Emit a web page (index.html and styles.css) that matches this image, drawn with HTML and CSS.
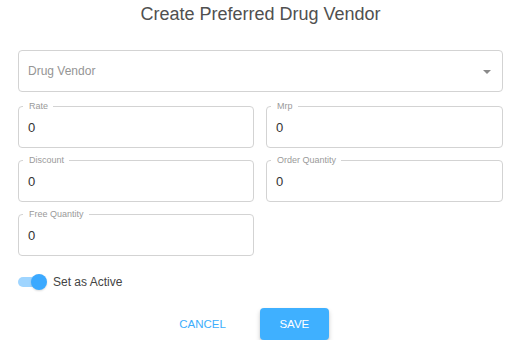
FILE: index.html
```html
<!DOCTYPE html>
<html>
<head>
<meta charset="utf-8">
<link rel="stylesheet" href="styles.css">
</head>
<body>
<div class="dialog">
  <h1 class="title">Create Preferred Drug Vendor</h1>
  <div class="select">
    <span class="placeholder">Drug Vendor</span>
    <svg class="arrow" width="8" height="4" viewBox="0 0 8 4"><path d="M0 0h8L4 4z" fill="#8a8a8a"/></svg>
  </div>
  <div class="grid">
    <fieldset class="field"><legend>Rate</legend><div class="value">0</div></fieldset>
    <fieldset class="field"><legend>Mrp</legend><div class="value">0</div></fieldset>
    <fieldset class="field"><legend>Discount</legend><div class="value">0</div></fieldset>
    <fieldset class="field"><legend>Order Quantity</legend><div class="value">0</div></fieldset>
    <fieldset class="field"><legend>Free Quantity</legend><div class="value">0</div></fieldset>
  </div>
  <div class="switch-row">
    <span class="switch"><span class="track"></span><span class="thumb"></span></span>
    <span class="switch-label">Set as Active</span>
  </div>
  <div class="actions">
    <button class="btn text">CANCEL</button>
    <button class="btn primary">SAVE</button>
  </div>
</div>
</body>
</html>
```
FILE: styles.css
```css
* { box-sizing: border-box; }
html, body { margin: 0; padding: 0; background: #fff; }
body { font-family: "Liberation Sans", Arial, sans-serif; color: #333; }
.dialog { padding: 0 18px; width: 521px; }
.title {
  margin: 0;
  font-size: 18px;
  font-weight: normal;
  line-height: 28px;
  text-align: center;
  color: #505050;
}
.select {
  margin-top: 22px;
  height: 42px;
  border: 1px solid #d3d3d3;
  border-radius: 4px;
  display: flex;
  align-items: center;
  padding: 0 10px 0 9px;
  justify-content: space-between;
}
.placeholder { font-size: 12px; color: #959595; }
.arrow { display: block; margin-top: 1px; margin-right: 1px; }
.grid {
  margin-top: 9px;
  display: grid;
  grid-template-columns: 236px 1fr;
  column-gap: 12px;
  row-gap: 7px;
}
.field {
  margin: 0;
  padding: 0;
  border: 1px solid #d3d3d3;
  border-radius: 4px;
  min-width: 0;
}
.field legend {
  margin-left: 4px;
  padding: 0 5px 0 6px;
  font-size: 9px;
  line-height: 10px;
  color: #9a9a9a;
}
.value {
  height: 36px;
  padding: 0 0 4px 9px;
  display: flex;
  align-items: center;
  font-size: 13px;
  color: #333;
}
.switch-row {
  margin-top: 18px;
  height: 16px;
  display: flex;
  align-items: center;
}
.switch { position: relative; width: 29px; height: 16px; display: inline-block; }
.track {
  position: absolute; left: 0; top: 3px;
  width: 27px; height: 10px; border-radius: 5px;
  background: #9fd5ff;
}
.thumb {
  position: absolute; left: 13px; top: 0;
  width: 16px; height: 16px; border-radius: 50%;
  background: #3ba9ff;
  box-shadow: 0 1px 2px rgba(0,0,0,0.15);
}
.switch-label { margin-left: 6px; font-size: 12px; color: #444; }
.actions {
  margin-top: 18px;
  display: flex;
  justify-content: center;
  gap: 18px;
  padding-right: 29px;
}
.btn {
  height: 32px;
  border: none;
  border-radius: 4px;
  font-family: "Liberation Sans", Arial, sans-serif;
  font-size: 11.5px;
  padding: 0 16px;
  background: transparent;
  cursor: pointer;
}
.btn.text { color: #3daefc; }
.btn.primary {
  width: 69px;
  background: #3fb0ff;
  color: #fff;
  box-shadow: 0 3px 5px rgba(0,0,0,0.18), 0 1px 2px rgba(0,0,0,0.1);
}
```
